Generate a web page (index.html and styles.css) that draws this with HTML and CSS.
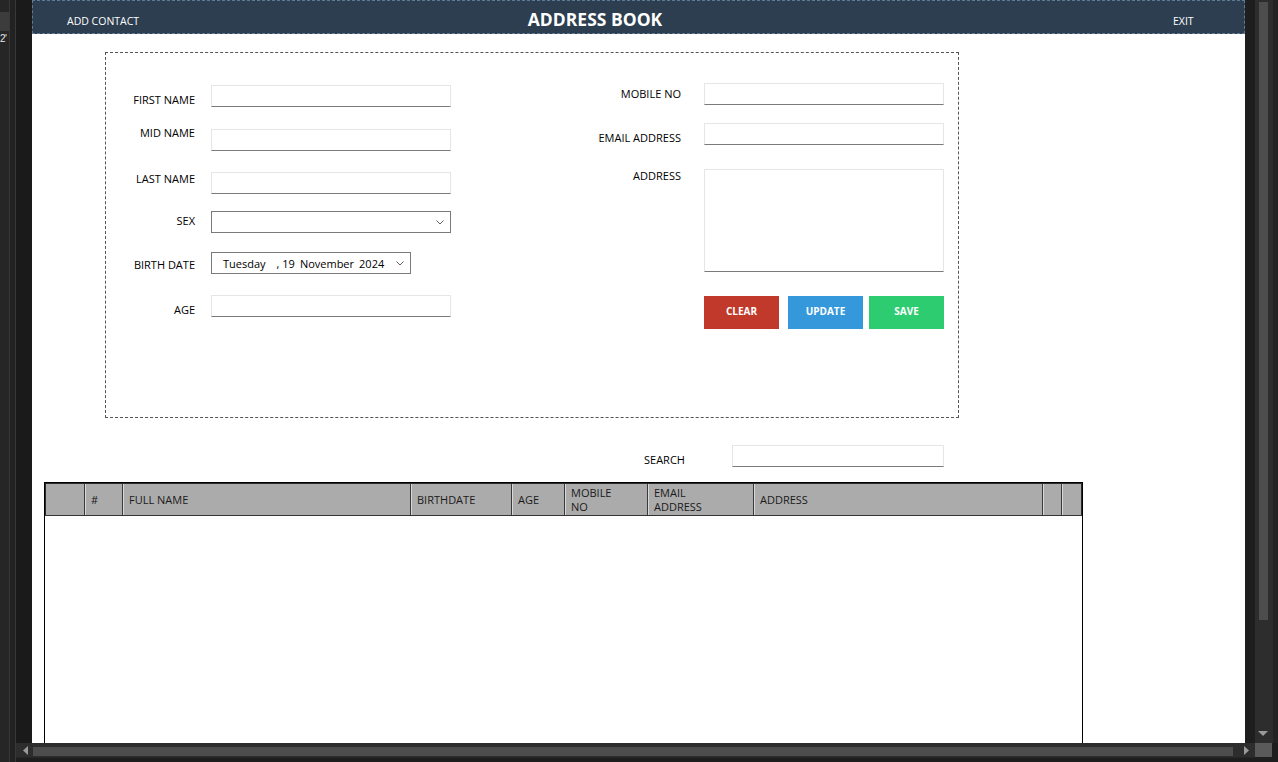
FILE: index.html
```html
<!DOCTYPE html>
<html>
<head>
<meta charset="utf-8">
<title>Address Book</title>
<link rel="stylesheet" href="styles.css">
</head>
<body>
<div class="screen">
  <div class="top">
    <div class="side">
      <div class="side-a"><div class="side-block"></div><span class="side-text">2'</span></div>
      <div class="side-line"></div>
      <div class="side-b"></div>
      <div class="side-line"></div>
      <div class="side-c"></div>
    </div>
    <div class="app">
      <header class="titlebar">
        <div class="tb-left">ADD CONTACT</div>
        <div class="tb-title">ADDRESS BOOK</div>
        <div class="tb-right">EXIT</div>
      </header>
      <div class="canvas">
        <section class="formbox">
          <div class="col-left">
            <div class="row r1"><label class="lbl">FIRST NAME</label><input class="field" type="text"></div>
            <div class="row r2"><label class="lbl">MID NAME</label><input class="field" type="text"></div>
            <div class="row r3"><label class="lbl">LAST NAME</label><input class="field" type="text"></div>
            <div class="row r4"><label class="lbl">SEX</label>
              <div class="combo"><svg class="chev" width="8" height="5" viewBox="0 0 8 5"><polyline points="0.5,0.5 4,4 7.5,0.5" fill="none" stroke="#606060" stroke-width="1"/></svg></div>
            </div>
            <div class="row r5"><label class="lbl">BIRTH DATE</label>
              <div class="datebox">
                <span class="d-day">Tuesday</span><span class="d-num">, 19</span><span class="d-month">November</span><span class="d-year">2024</span>
                <svg class="chev dchev" width="8" height="5" viewBox="0 0 8 5"><polyline points="0.5,0.5 4,4 7.5,0.5" fill="none" stroke="#606060" stroke-width="1"/></svg>
              </div>
            </div>
            <div class="row r6"><label class="lbl">AGE</label><input class="field" type="text"></div>
          </div>
          <div class="col-right">
            <div class="row q1"><label class="lbl2">MOBILE NO</label><input class="field2" type="text"></div>
            <div class="row q2"><label class="lbl2">EMAIL ADDRESS</label><input class="field2" type="text"></div>
            <div class="row q3"><label class="lbl2">ADDRESS</label><textarea class="area"></textarea></div>
            <div class="btns">
              <button class="btn btn-clear">CLEAR</button>
              <button class="btn btn-update">UPDATE</button>
              <button class="btn btn-save">SAVE</button>
            </div>
          </div>
        </section>
        <div class="search">
          <label class="search-lbl">SEARCH</label>
          <input class="search-field" type="text">
        </div>
        <div class="table">
          <div class="thead">
            <div class="th"></div>
            <div class="th">#</div>
            <div class="th">FULL NAME</div>
            <div class="th">BIRTHDATE</div>
            <div class="th">AGE</div>
            <div class="th">MOBILE<br>NO</div>
            <div class="th">EMAIL<br>ADDRESS</div>
            <div class="th">ADDRESS</div>
            <div class="th"></div>
            <div class="th"></div>
          </div>
          <div class="tbody"></div>
        </div>
      </div>
    </div>
    <div class="gutter"></div>
    <div class="vscroll">
      <div class="vs-track">
        <div class="vs-thumb"></div>
        <svg class="vs-down" width="10" height="5" viewBox="0 0 10 5"><polygon points="0,0 10,0 5,5" fill="#9a9a9a"/></svg>
      </div>
      <div class="vs-edge"></div>
    </div>
  </div>
  <div class="bottom">
    <div class="b-left">
      <div class="side-a2"></div>
      <div class="side-line"></div>
      <div class="side-b"></div>
      <div class="side-line"></div>
    </div>
    <div class="hscroll">
      <div class="hs-bar">
        <svg class="hs-arrow hs-l" width="5" height="9" viewBox="0 0 5 9"><polygon points="5,0 5,9 0,4.5" fill="#9a9a9a"/></svg>
        <div class="hs-thumb"></div>
        <svg class="hs-arrow hs-r" width="5" height="9" viewBox="0 0 5 9"><polygon points="0,0 0,9 5,4.5" fill="#9a9a9a"/></svg>
      </div>
      <div class="hs-foot"></div>
    </div>
    <div class="corner-col">
      <div class="corner"></div>
    </div>
    <div class="b-right"></div>
  </div>
</div>
</body>
</html>
```

FILE: styles.css
```css
* { box-sizing: border-box; }
body {
  margin: 0;
  background: #1e1e1e;
  font-family: "Open Sans", "Noto Sans", sans-serif;
  overflow: hidden;
}
.screen { width: 1278px; height: 762px; display: flex; flex-direction: column; }
.top { display: flex; height: 743px; }

/* left strip */
.side { width: 32px; display: flex; }
.side-a { width: 9px; background: #262626; display: flex; flex-direction: column; overflow: hidden; }
.side-block { height: 19px; margin-top: 12px; background: #3c3c3c; }
.side-text { color: #e8e8e8; font-family: "Liberation Sans", Arial, sans-serif; font-size: 10px; line-height: 16px; white-space: nowrap; letter-spacing: -0.5px; }
.side-line { width: 1px; background: #383838; }
.side-b { width: 5px; background: #222222; }
.side-c { width: 16px; background: #1a1a1a; }

/* app window */
.app { width: 1213px; display: flex; flex-direction: column; overflow: hidden; background: #ffffff; }
.titlebar {
  height: 34px;
  flex: none;
  background: #2c3e50;
  border: 1px dashed #5f7a93;
  display: grid;
  grid-template-columns: 462px 200px 1fr;
  color: #ffffff;
}
.tb-left { padding-left: 34px; padding-top: 12px; font-size: 10.5px; line-height: 16px; }
.tb-title { text-align: center; font-weight: 700; font-size: 17.5px; line-height: 20px; padding-top: 8px; }
.tb-right { padding-left: 478px; padding-top: 12px; font-size: 10.5px; line-height: 16px; }

.canvas { flex: 1; padding-top: 18px; }

/* form */
.formbox {
  margin-left: 73px;
  width: 854px;
  height: 366px;
  border: 1px dashed #555555;
  display: flex;
}
.col-left { width: 345px; padding-top: 32px; }
.col-right { width: 400px; margin-left: 108px; padding-top: 30px; }
.row { display: flex; align-items: flex-start; }
.lbl { width: 89px; text-align: right; font-size: 11px; line-height: 14px; color: #000; white-space: nowrap; }
.lbl2 { width: 122px; text-align: right; font-size: 11px; line-height: 14px; color: #000; white-space: nowrap; }
.field, .field2, .area, .search-field {
  height: 22px;
  border: 1px solid #e6e6e6;
  border-bottom-color: #7a7a7a;
  background: #fff;
  padding: 0;
  margin: 0;
  outline: none;
}
.field { width: 240px; margin-left: 16px; }
.field2 { width: 240px; margin-left: 23px; }
.area { width: 240px; height: 103px; margin-left: 23px; resize: none; }

.r1 .lbl { margin-top: 8px; }
.r2 { margin-top: 22px; }
.r2 .lbl { margin-top: -3px; }
.r3 { margin-top: 21px; }
.r3 .lbl { margin-top: 0; }
.r4 { margin-top: 17px; }
.r4 .lbl { margin-top: 3px; }
.r5 { margin-top: 19px; }
.r5 .lbl { margin-top: 6px; }
.r6 { margin-top: 21px; }
.r6 .lbl { margin-top: 8px; }

.combo {
  width: 240px; height: 22px; margin-left: 16px;
  border: 1px solid #7a7a7a;
  display: flex; align-items: center; justify-content: flex-end;
  padding-right: 6px;
}
.datebox {
  width: 200px; height: 22px; margin-left: 16px;
  border: 1px solid #7a7a7a;
  display: flex; align-items: center;
  padding-left: 11px;
  font-size: 11px; color: #000;
}
.d-num { margin-left: 11px; }
.d-month { margin-left: 5px; }
.d-year { margin-left: 5px; }
.dchev { margin-left: auto; margin-right: 6px; }
.chev { display: block; }

.q1 .lbl2 { margin-top: 4px; }
.q2 { margin-top: 18px; }
.q2 .lbl2 { margin-top: 8px; }
.q3 { margin-top: 24px; }
.q3 .lbl2 { margin-top: 0; }

.btns { display: flex; margin-top: 24px; margin-left: 145px; }
.btn {
  width: 75px; height: 33px;
  border: none; margin: 0; padding: 0 0 3px 0;
  color: #fff; font-family: "Open Sans", "Noto Sans", sans-serif;
  font-weight: 700; font-size: 10px;
}
.btn-clear { background: #c0392b; }
.btn-update { background: #3498db; margin-left: 9px; }
.btn-save { background: #2ecc71; margin-left: 6px; }

/* search */
.search { display: flex; align-items: flex-start; margin-top: 27px; padding-left: 612px; height: 22px; }
.search-lbl { width: 88px; font-size: 11px; line-height: 14px; margin-top: 8px; color: #000; }
.search-field { width: 212px; }

/* table */
.table {
  margin-top: 15px;
  margin-left: 12px;
  width: 1039px;
  border: 1px solid #000;
}
.thead {
  display: grid;
  grid-template-columns: 39px 38px 288px 101px 53px 83px 106px 289px 19px 19px;
  border: 1px solid #2a2a2a;
  border-bottom: 1px solid #333;
  background: #ababab;
  height: 33px;
}
.th {
  border-right: 1px solid #3a3a3a;
  border-left: 1px solid #d8d8d8;
  font-size: 11px;
  line-height: 14px;
  color: #1a1a1a;
  padding-left: 5px;
  display: flex;
  align-items: center;
}
.th:first-child { border-left: none; }
.th:last-child { border-right: none; }
.tbody { height: 300px; background: #fff; }

.gutter { width: 10px; background: #1e1e1e; }
.vscroll { width: 23px; display: flex; }
.vs-track { width: 18px; background: #2d2d2d; display: flex; flex-direction: column; align-items: flex-start; }
.vs-thumb { width: 9px; height: 618px; margin-top: 2px; margin-left: 4px; background: #4d4d4d; }
.vs-down { margin-top: auto; margin-bottom: 7px; margin-left: 3px; display: block; }
.vs-edge { width: 5px; background: #232323; }

/* bottom scrollbar */
.bottom { height: 19px; display: flex; }
.b-left { width: 16px; display: flex; }
.side-a2 { width: 9px; background: #262626; }
.hscroll { width: 1239px; display: flex; flex-direction: column; }
.hs-bar { height: 14px; background: #2d2d2d; display: flex; align-items: flex-start; }
.hs-arrow { display: block; margin-top: 3px; }
.hs-l { margin-left: 7px; }
.hs-thumb { width: 1200px; height: 9px; margin-top: 4px; margin-left: 5px; background: #4d4d4d; }
.hs-r { margin-left: 11px; }
.hs-foot { flex: 1; background: #1e1e1e; border-top: 1px solid #262626; }
.corner-col { width: 17px; display: flex; flex-direction: column; }
.corner { height: 14px; background: #5a5a5a; }
.b-right { flex: 1; background: #1e1e1e; }
```
